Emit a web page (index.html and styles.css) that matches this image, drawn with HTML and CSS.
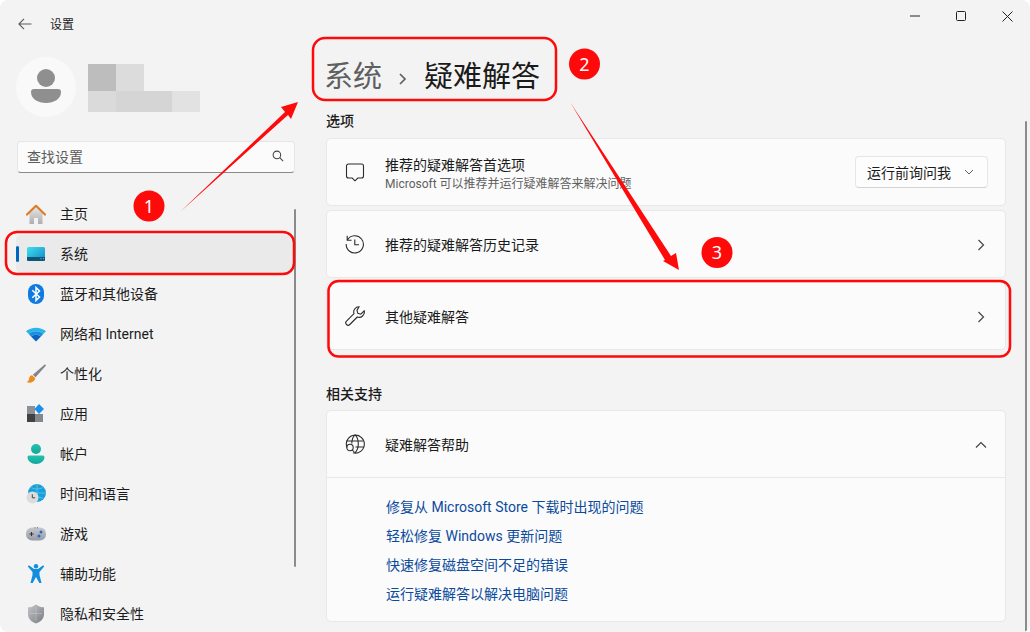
FILE: index.html
```html
<!DOCTYPE html>
<html lang="zh-CN">
<head>
<meta charset="utf-8">
<title>设置</title>
<link rel="stylesheet" href="styles.css">
</head>
<body>
<div class="window">
  <header class="titlebar">
    <svg class="back" width="14" height="12" viewBox="0 0 14 12" fill="none" stroke="#5a5a5a" stroke-width="1.1"><path d="M13.5 6H1M6 .8 .9 6 6 11.2"/></svg>
    <span class="app-title">设置</span>
    <div class="controls">
      <span class="ctl"><svg width="10" height="10" viewBox="0 0 10 10" fill="none" stroke="#222" stroke-width="1"><path d="M0 5h10"/></svg></span>
      <span class="ctl"><svg width="10" height="10" viewBox="0 0 10 10" fill="none" stroke="#222" stroke-width="1"><rect x=".5" y=".5" width="9" height="9" rx="1"/></svg></span>
      <span class="ctl"><svg width="11" height="11" viewBox="0 0 11 11" fill="none" stroke="#222" stroke-width="1"><path d="M.5.5l10 10M10.5.5l-10 10"/></svg></span>
    </div>
  </header>

  <aside class="sidebar">
    <div class="profile">
      <div class="avatar">
        <svg width="30" height="36" viewBox="0 0 30 36" fill="#8f8f8f"><circle cx="15" cy="9" r="9"/><path d="M3 20h24a3 3 0 0 1 3 3c0 7-7 11-15 11S0 30 0 23a3 3 0 0 1 3-3z"/></svg>
      </div>
      <div class="mosaic">
        <div class="mosaic-row tall"><i class="m28 c1"></i><i class="m28 c2"></i></div>
        <div class="mosaic-row"><i class="m28 c3"></i><i class="m56 c4"></i><i class="m28 c5"></i></div>
      </div>
    </div>
    <div class="search">
      <span>查找设置</span>
      <svg width="12" height="12" viewBox="0 0 14 14" fill="none" stroke="#444" stroke-width="1.2"><circle cx="5.7" cy="5.700" r="4.400"/><path d="M9 9l4 4"/></svg>
    </div>
    <nav class="nav">
      <a class="nav-item">
        <svg class="nav-icon" width="20" height="20" viewBox="0 0 20 20"><defs><linearGradient id="gHome" x1="0" y1="0" x2="0" y2="1"><stop offset="0" stop-color="#e6e6e6"/><stop offset="1" stop-color="#aeaeae"/></linearGradient></defs><path d="M3.500 9 10 3l6.500 6v11h-4.500v-6H8v6H3.500z" fill="url(#gHome)"/><path d="M1 10.500 10 1.800l9 8.700" fill="none" stroke="#e07b25" stroke-width="2.200" stroke-linecap="round" stroke-linejoin="round"/></svg>
        <span>主页</span>
      </a>
      <a class="nav-item active">
        <svg class="nav-icon" width="20" height="20" viewBox="0 0 20 20"><defs><linearGradient id="gSys" x1="0" y1="0" x2="1" y2="1"><stop offset="0" stop-color="#3fe0ec"/><stop offset="1" stop-color="#1288c8"/></linearGradient></defs><rect x="1" y="3" width="18" height="14" rx="1.500" fill="url(#gSys)"/><path d="M1 13h18v2.500a1.500 1.500 0 0 1-1.500 1.500h-15A1.500 1.500 0 0 1 1 15.500z" fill="#0f5579"/><path d="M14.500 14.700h1M17 14.700h.8" stroke="#9fd4ea" stroke-width=".9"/></svg>
        <span>系统</span>
      </a>
      <a class="nav-item">
        <svg class="nav-icon" width="20" height="20" viewBox="0 0 20 20"><rect x="2" y="0" width="16" height="20" rx="8" fill="#0f7ae0"/><path d="M6.300 6.300 13.500 13 10 16.500v-13l3.500 3.500-7.200 6.700" fill="none" stroke="#fff" stroke-width="1.500"/></svg>
        <span>蓝牙和其他设备</span>
      </a>
      <a class="nav-item">
        <svg class="nav-icon" width="20" height="20" viewBox="0 0 20 20"><path d="M0 7.200C5.500 2.500 14.500 2.500 20 7.200l-2.500 2.600C13 6.400 7 6.400 2.500 9.800z" fill="#27b6ea"/><path d="M2.500 9.800C7 6.400 13 6.400 17.500 9.800L15 12.400c-3-2.200-7-2.200-10 0z" fill="#1a8fe0"/><path d="M5 12.400c3-2.200 7-2.200 10 0l-5 5z" fill="#0b63c4"/></svg>
        <span>网络和 Internet</span>
      </a>
      <a class="nav-item">
        <svg class="nav-icon" width="20" height="20" viewBox="0 0 20 20"><defs><linearGradient id="gBrush" x1="0" y1="0" x2="1" y2="1"><stop offset="0" stop-color="#9a9da3"/><stop offset="1" stop-color="#6a6d72"/></linearGradient></defs><path d="M19 .3 20 1.500 9.500 13.200 6.800 10.700z" fill="url(#gBrush)"/><path d="M6 11.300c-3 .5-2.800 4-3.500 5.200-.4.800-1.200 1.200-2 1.600 3.500 1.500 8 .4 8.800-3.800z" fill="#ee8a1e"/></svg>
        <span>个性化</span>
      </a>
      <a class="nav-item">
        <svg class="nav-icon" width="20" height="20" viewBox="0 0 20 20"><rect x="1" y="2" width="8" height="8" fill="#8d9095"/><rect x="1" y="10" width="8" height="8" fill="#3f4145"/><rect x="9" y="10" width="8" height="8" fill="#84878c"/><path d="M13 0 18 5 13 10 8.500 5z" fill="#1c8fe8"/></svg>
        <span>应用</span>
      </a>
      <a class="nav-item">
        <svg class="nav-icon" width="20" height="20" viewBox="0 0 20 20"><defs><linearGradient id="gAcc" x1="0" y1="0" x2="0" y2="1"><stop offset="0" stop-color="#22c2ae"/><stop offset="1" stop-color="#12a79c"/></linearGradient></defs><circle cx="10" cy="5" r="5" fill="url(#gAcc)"/><path d="M3 11.500h14a1.500 1.500 0 0 1 1.500 1.500c0 4-4 7-8.500 7s-8.500-3-8.500-7A1.500 1.500 0 0 1 3 11.500z" fill="url(#gAcc)"/></svg>
        <span>帐户</span>
      </a>
      <a class="nav-item">
        <svg class="nav-icon" width="20" height="20" viewBox="0 0 20 20"><circle cx="11" cy="9" r="9" fill="#1a9fd8"/><path d="M11 0v18M2 9h18M5 3.500c4 2 8 2 12 0M5 14.500c4-2 8-2 12 0" stroke="#6bd0ee" stroke-width=".7" fill="none"/><circle cx="6.500" cy="13.500" r="6" fill="#dcdcdc"/><path d="M6.300 10.300v3.500h2.800" stroke="#444" fill="none"/></svg>
        <span>时间和语言</span>
      </a>
      <a class="nav-item">
        <svg class="nav-icon" width="20" height="20" viewBox="0 0 20 20"><defs><linearGradient id="gGame" x1="0" y1="0" x2="0" y2="1"><stop offset="0" stop-color="#c5c8cf"/><stop offset="1" stop-color="#989ba3"/></linearGradient></defs><rect x="0" y="3.500" width="20" height="13" rx="6" fill="url(#gGame)"/><path d="M3.500 10h4M5.500 8v4" stroke="#333" stroke-width="1"/><circle cx="15" cy="8" r="1.500" fill="#1c6fc8"/><circle cx="13" cy="12" r="1.500" fill="#1c6fc8"/><path d="M8.500 3.800h1M11 3.800h1" stroke="#666"/></svg>
        <span>游戏</span>
      </a>
      <a class="nav-item">
        <svg class="nav-icon" width="20" height="20" viewBox="0 0 20 20" fill="#128de0"><circle cx="10" cy="2.200" r="2.200"/><path d="M2.800 1.300 8 5h4l5.200-3.700 1 1.300L13.500 8v3l2 8h-2.200L10 13l-3.300 6H4.500l2-8V8L1.800 2.600z"/></svg>
        <span>辅助功能</span>
      </a>
      <a class="nav-item">
        <svg class="nav-icon" width="20" height="20" viewBox="0 0 20 20"><defs><linearGradient id="gShield" x1="0" y1="0" x2="1" y2="1"><stop offset="0" stop-color="#c4c6ca"/><stop offset="1" stop-color="#777a80"/></linearGradient></defs><path d="M10 .5c2.500 2 5.500 2.800 8 2.800V10c0 5-3.500 8-8 9.500C5.500 18 2 15 2 10V3.300c2.500 0 5.500-.8 8-2.800z" fill="url(#gShield)"/><path d="M10 3v14M4 9.500h12" stroke="#dfe0e2" stroke-width=".6" opacity=".6"/></svg>
        <span>隐私和安全性</span>
      </a>
    </nav>
    <div class="scroll-thumb side-thumb"></div>
  </aside>

  <main class="content">
    <h1 class="crumb">
      <span class="crumb-parent">系统</span>
      <svg width="10" height="14" viewBox="0 0 10 14" fill="none" stroke="#5f5f5f" stroke-width="1.700"><path d="M2 2l5 5-5 5"/></svg>
      <span class="crumb-current">疑难解答</span>
    </h1>

    <h2 class="section-label first">选项</h2>
    <div class="cards">
      <div class="card">
        <svg class="card-icon" width="20" height="20" viewBox="0 0 20 20" fill="none" stroke="#2b2b2b" stroke-width="1.100"><path d="M3.500 2h13A2 2 0 0 1 18.500 4v10a2 2 0 0 1-2 2h-3.700L10 18.800 7.200 16H3.500a2 2 0 0 1-2-2V4a2 2 0 0 1 2-2z"/></svg>
        <div class="card-text two">
          <div class="card-title">推荐的疑难解答首选项</div>
          <div class="card-sub">Microsoft 可以推荐并运行疑难解答来解决问题</div>
        </div>
        <div class="dropdown">
          <span>运行前询问我</span>
          <svg width="10" height="6" viewBox="0 0 10 6" fill="none" stroke="#5f5f5f" stroke-width="1"><path d="M1 1l4 4 4-4"/></svg>
        </div>
      </div>
      <div class="card">
        <svg class="card-icon" width="20" height="20" viewBox="0 0 20 20" fill="none" stroke="#2b2b2b" stroke-width="1.100"><path d="M2.200 1.800v4.400h4.400M2.400 6A8.600 8.600 0 1 1 1.200 10"/><path d="M9.800 5.500v5.200h4.200"/></svg>
        <div class="card-text"><div class="card-title">推荐的疑难解答历史记录</div></div>
        <svg class="chev" width="8" height="12" viewBox="0 0 8 12" fill="none" stroke="#444" stroke-width="1.200"><path d="M1.500 1l5 5-5 5"/></svg>
      </div>
      <div class="card">
        <svg class="card-icon" width="20" height="20" viewBox="0 0 20 20" fill="none" stroke="#2b2b2b" stroke-width="1.100"><path d="M14 .8a5.200 5.200 0 0 0-5 6.900L1.500 15.200a2.300 2.300 0 0 0 3.300 3.300L12.300 11a5.200 5.200 0 0 0 6.900-6.100L15.800 8.200 12.800 7.400 12 4.400z"/></svg>
        <div class="card-text"><div class="card-title">其他疑难解答</div></div>
        <svg class="chev" width="8" height="12" viewBox="0 0 8 12" fill="none" stroke="#444" stroke-width="1.200"><path d="M1.500 1l5 5-5 5"/></svg>
      </div>
    </div>

    <h2 class="section-label">相关支持</h2>
    <section class="card-group">
      <div class="group-head">
        <svg class="card-icon" width="20" height="20" viewBox="0 0 20 20" fill="none" stroke="#2b2b2b" stroke-width="1.100"><path d="M2 13.500A9 9 0 1 1 8 18.800"/><path d="M10 .8C7.500 3 6.800 5 6.800 9.500M10 .8c3 2.500 3.300 5.500 3.300 9 0 3.500-.8 6.500-3.300 9M1.200 7h17.600M10.500 13h8.300"/><circle cx="5" cy="13.500" r="3.200"/><path d="M7.300 16l2.300 2.500"/></svg>
        <div class="card-text"><div class="card-title">疑难解答帮助</div></div>
        <svg class="chev up" width="12" height="8" viewBox="0 0 12 8" fill="none" stroke="#444" stroke-width="1.200"><path d="M1 6.500l5-5 5 5"/></svg>
      </div>
      <div class="links">
        <a class="link">修复从 Microsoft Store 下载时出现的问题</a>
        <a class="link">轻松修复 Windows 更新问题</a>
        <a class="link">快速修复磁盘空间不足的错误</a>
        <a class="link">运行疑难解答以解决电脑问题</a>
      </div>
    </section>
    <div class="scroll-thumb main-thumb"></div>
  </main>

  <svg class="annotations" width="1030" height="632" viewBox="0 0 1030 632">
    <g fill="none" stroke="#ff0a0a" stroke-width="2.500">
      <rect x="6" y="232" width="288" height="42" rx="11"/>
      <rect x="313" y="38" width="243" height="62" rx="12"/>
      <rect x="328.500" y="281" width="681.500" height="75.500" rx="10"/>
    </g>
    <g fill="#ff0a0a">
      <polygon points="180,212 285,112 281,107 298,102 291,119 288,115"/>
      <polygon points="570,102 665,260 663,261 679,270 676,253 671,256"/>
      <circle cx="149" cy="206" r="15.500"/>
      <circle cx="584.500" cy="64" r="15.500"/>
      <circle cx="717" cy="252.500" r="15.500"/>
    </g>
    <g class="badge-text" text-anchor="middle" fill="#fff">
      <text x="149" y="212.500">1</text>
      <text x="584.500" y="70.500">2</text>
      <text x="717" y="259">3</text>
    </g>
  </svg>
</div>
</body>
</html>
```
FILE: styles.css
```css
* { box-sizing: border-box; }
html, body { margin: 0; padding: 0; background: #fff; }
body { font-family: "Roboto", "Noto Sans CJK SC", sans-serif; color: #1b1b1b; font-size: 14px; }

.window {
  position: relative;
  width: 1030px;
  height: 632px;
  overflow: hidden;
  background: #f3f3f3;
  border-radius: 8px;
  display: grid;
  grid-template-columns: 310px 1fr;
  grid-template-rows: 48px 1fr;
}

.titlebar {
  grid-column: 1 / 3;
  display: flex;
  align-items: center;
  padding-left: 18px;
}
.back { margin-right: 18px; }
.app-title { font-size: 12px; padding-bottom: 2px; }
.controls { margin-left: auto; display: flex; align-self: flex-start; }
.ctl { width: 46px; height: 32px; display: flex; align-items: center; justify-content: center; }

.sidebar { position: relative; padding: 9px 0 0 16px; }
.profile { display: flex; align-items: flex-start; gap: 12px; }
.avatar {
  width: 60px;
  height: 60px;
  border-radius: 50%;
  background: #f9f9f9;
  display: flex;
  align-items: center;
  justify-content: center;
}
.mosaic { padding-top: 7px; }
.mosaic-row { display: flex; height: 21px; }
.mosaic-row.tall { height: 27px; }
.mosaic i { display: block; height: 100%; }
.m28 { width: 28px; }
.m56 { width: 56px; }
.c1 { background: #bdbdbd; }
.c2 { background: #dcdcdc; }
.c3 { background: #dadada; }
.c4 { background: #d5d5d5; }
.c5 { background: #e2e2e2; }

.search {
  margin: 24px 0 0 1px;
  width: 278px;
  height: 32px;
  background: #fbfbfb;
  border: 1px solid #e6e6e6;
  border-bottom: 1px solid #8a8a8a;
  border-radius: 4px;
  display: flex;
  align-items: center;
  justify-content: space-between;
  padding: 0 10px 2px 9px;
  color: #5c5c5c;
}

.nav { margin-top: 22px; display: flex; flex-direction: column; gap: 2px; width: 277px; }
.nav-item {
  position: relative;
  height: 38px;
  display: flex;
  align-items: center;
  padding-left: 10px;
  border-radius: 5px;
}
.nav-item span { padding-bottom: 2px; }
.nav-icon { margin-right: 14px; flex: none; }
.nav-item.active { background: #eaeaea; }
.nav-item.active::before {
  content: "";
  position: absolute;
  left: 0;
  top: 11px;
  width: 3px;
  height: 16px;
  border-radius: 2px;
  background: #0067c0;
}

.scroll-thumb { position: absolute; width: 2px; background: #8b8b8b; border-radius: 1px; }
.side-thumb { left: 294px; top: 161px; height: 358px; }
.main-thumb { left: 715px; top: 73px; bottom: 0; }

.content { position: relative; padding: 0 24px 0 16px; }
.crumb {
  margin: 0;
  height: 63px;
  padding-bottom: 4px;
  display: flex;
  align-items: center;
  font-size: 29px;
  font-weight: 400;
  line-height: 1;
}
.crumb-parent { color: #5f5f5f; margin-left: -2px; }
.crumb svg { margin: 2px 16px 0 16px; }
.crumb-current { color: #1a1a1a; font-weight: 400; }

.section-label {
  margin: 34px 0 6px;
  height: 20px;
  line-height: 20px;
  font-size: 14px;
  font-weight: 500;
  color: #1b1b1b;
}
.section-label.first { margin: 0 0 7px; }

.cards { display: flex; flex-direction: column; gap: 4px; }
.card, .group-head { display: flex; align-items: center; height: 68px; padding: 0 19px 0 18px; }
.group-head { height: 66px; }
.card, .card-group {
  background: #fbfbfb;
  border: 1px solid #e8e8e8;
  border-radius: 5px;
}
.card-icon { flex: none; margin-right: 20px; }
.card-text { flex: 1; min-width: 0; padding-top: 2px; }
.card-text.two { padding-top: 5px; }
.card-title { line-height: 19px; }
.card-sub { font-size: 12px; line-height: 18px; color: #5f5f5f; }
.chev { margin: 2px 1px 0 0; }
.chev.up { margin-right: -1px; }

.dropdown {
  width: 133px;
  height: 32px;
  margin-right: -2px;
  background: #fdfdfd;
  border: 1px solid #e6e6e6;
  border-bottom-color: #d2d2d2;
  border-radius: 4px;
  display: flex;
  align-items: center;
  justify-content: space-between;
  padding: 0 13px 0 11px;
}

.card-group { height: 212px; }
.links {
  border-top: 1px solid #e8e8e8;
  padding: 15px 0 0 59px;
  display: flex;
  flex-direction: column;
}
.link { height: 29px; line-height: 29px; color: #0b4a9c; }

.annotations { position: absolute; left: 0; top: 0; pointer-events: none; }
.badge-text { font-family: "Noto Sans", sans-serif; font-size: 18px; }
```
